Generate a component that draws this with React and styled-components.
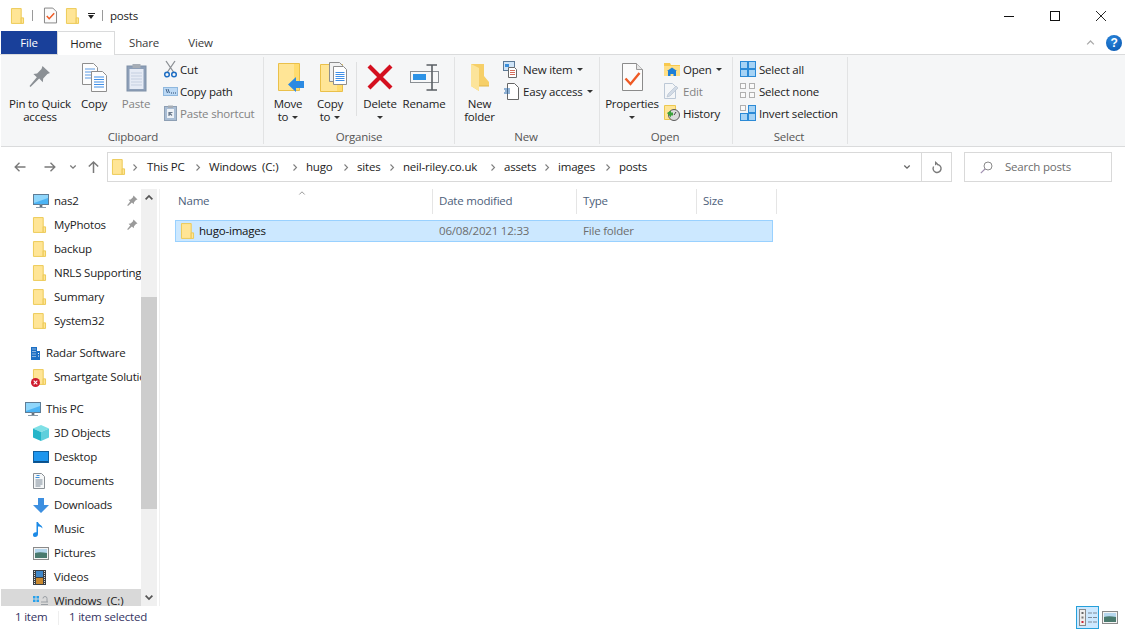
import React from 'react';
import styled, { createGlobalStyle } from 'styled-components';

const Global = createGlobalStyle`
  html, body { margin: 0; padding: 0; background: #fff; }
  body { font-family: "Open Sans", "Noto Sans", "Liberation Sans", sans-serif; font-size: 11.5px; color: #1a1a1a; letter-spacing: -0.2px; }
  #root { width: 1125px; height: 629px; overflow: hidden; }
`;

const Window = styled.div`
  width: 1125px; height: 629px; display: flex; flex-direction: column; overflow: hidden; background: #fff;
`;
const Svg = styled.svg`display: block; flex-shrink: 0; overflow: visible;`;

/* ---------- icons ---------- */
const FolderIcon = ({ w = 14, h = 17 }) => (
  <Svg width={w} height={h} viewBox="0 0 14 17">
    <path d="M.5.5h10.5v16H.5z" fill="#ffe596" stroke="#ecc850" />
    <path d="M11 10.5h2.5v6H11z" fill="#ffe596" stroke="#ecc850" />
  </Svg>
);
const CheckDoc = () => (
  <Svg width="13" height="17" viewBox="0 0 14 17">
    <path d="M.5.5h9l4 4v12H.5z" fill="#fbfbfb" stroke="#808080" />
    <path d="M3 9l2.6 3L11 6" fill="none" stroke="#ef5a24" strokeWidth="1.6" />
  </Svg>
);
const PinSmall = () => (
  <Svg width="11" height="11" viewBox="0 0 11 11">
    <path d="M6.5.5l4 4-1.5.5-2 2.2-.3 2-1.8-1.8L1 11 .2 10.2 3.2 6.6 1.6 4.8l2-.3 2.2-2z" fill="#9a9a9a" />
  </Svg>
);
const PinLarge = () => (
  <Svg width="22" height="22" viewBox="0 0 22 22">
    <path d="M13.5 0L21 7l-2.6 1-4.2 4.6-.4 3.6-3.6-3.6L1.5 21 .5 20l7.3-8.7L4.4 8l3.7-.5 4.4-4.6z" fill="#8b9095" />
  </Svg>
);
const CopyLarge = () => (
  <Svg width="25" height="29" viewBox="0 0 25 29">
    <path d="M.5.5h11l4 4v17H.5z" fill="#fdfdfd" stroke="#8e8e8e" />
    <path d="M3 6h10M3 9h10M3 12h10M3 15h10" stroke="#5b9be6" />
    <path d="M9.5 8.5h11l4 4v16h-15z" fill="#fdfdfd" stroke="#8e8e8e" />
    <path d="M12 14h10M12 16.500h10M12 19h10M12 21.500h10M12 24h10" stroke="#3f8fe8" />
  </Svg>
);
const PasteLarge = () => (
  <Svg width="21" height="29" viewBox="0 0 21 29">
    <rect x="1" y="3" width="19" height="25" fill="#8d9fb8" stroke="#7f90a8" />
    <rect x="3.500" y="6" width="14" height="20" fill="#e6ebf5" />
    <path d="M5 10h11M5 13h11M5 16h11M5 19h11M5 22h11" stroke="#c5cfe0" />
    <rect x="6.500" y="1" width="8" height="4" fill="#a6adb6" />
  </Svg>
);
const CutIcon = () => (
  <Svg width="13" height="17" viewBox="0 0 13 17">
    <path d="M2 0l7.500 11M11 0L3.500 11" stroke="#8b8f94" strokeWidth="1.300" />
    <circle cx="3" cy="13.500" r="2.300" fill="none" stroke="#1f6fc4" strokeWidth="1.500" />
    <circle cx="10" cy="13.500" r="2.300" fill="none" stroke="#1f6fc4" strokeWidth="1.500" />
  </Svg>
);
const PathIcon = () => (
  <Svg width="15" height="9" viewBox="0 0 15 9">
    <rect x=".5" y=".5" width="14" height="8" fill="#bcd9f5" stroke="#8fb8de" />
    <path d="M3 2l1.500 4M5 2l1.500 4" stroke="#24466e" strokeWidth=".8" />
    <path d="M8 6h1M10 6h1M12 6h1" stroke="#24466e" />
  </Svg>
);
const PasteShortcutIcon = () => (
  <Svg width="13" height="16" viewBox="0 0 13 16">
    <rect x=".5" y="1.500" width="12" height="14" fill="#a9bdd4" stroke="#8d9fb4" />
    <rect x="3" y="4" width="7" height="9" fill="#eef2f7" />
    <rect x="4" y=".5" width="5" height="2.500" fill="#a6adb6" />
    <path d="M5 11V7.500h3.500M5.500 8L8 10.500" fill="none" stroke="#6d7c8e" strokeWidth="1.200" />
  </Svg>
);
const MoveIcon = () => (
  <Svg width="27" height="29" viewBox="0 0 27 29">
    <path d="M.5.500h21v27H.5z" fill="#ffdc6e" stroke="#eac04a" />
    <path d="M1 1h15v26H1z" fill="#ffe596" />
    <path d="M10 21.500l8-7.500v4h8v7h-8v4z" fill="#2c8ae2" />
  </Svg>
);
const CopyToIcon = () => (
  <Svg width="27" height="30" viewBox="0 0 27 30">
    <path d="M.5 2.500h22v27H.5z" fill="#ffdc6e" stroke="#eac04a" />
    <path d="M1 3h16v26H1z" fill="#ffe596" />
    <path d="M9.500.500h10l3 3v16h-13z" fill="#f2f2f2" stroke="#8e8e8e" />
    <path d="M13.500 4.500h10l3 3v15h-13z" fill="#fff" stroke="#8e8e8e" />
    <path d="M15.500 10.500h9M15.500 12.500h9M15.500 14.500h9M15.500 16.500h9M15.500 18.500h9" stroke="#3f8fe8" />
  </Svg>
);
const DeleteIcon = () => (
  <Svg width="26" height="26" viewBox="0 0 26 26">
    <path d="M2 2l22 22M24 2L2 24" stroke="#d40f1f" strokeWidth="4.200" />
  </Svg>
);
const RenameIcon = () => (
  <Svg width="29" height="27" viewBox="0 0 29 27">
    <rect x=".5" y="7.500" width="28" height="11" fill="#f7f8f9" stroke="#8a8f94" />
    <rect x="3" y="10" width="13" height="6" fill="#2d93e6" />
    <path d="M16.500 1h5.500v25h-5.500M27 1h-5M27 26h-5" fill="none" stroke="#5a5f64" strokeWidth="1.600" />
  </Svg>
);
const NewFolderIcon = () => (
  <Svg width="18" height="27" viewBox="0 0 18 27">
    <path d="M0 0h13v12l5 6v4H8v5l-8-5z" fill="#f6cf68" />
    <path d="M0 0l8 4v23l-8-5z" fill="#fce49a" />
    <path d="M8 22h10" stroke="#e2b74a" />
  </Svg>
);
const NewItemIcon = () => (
  <Svg width="17" height="17" viewBox="0 0 17 17">
    <rect x=".5" y=".5" width="11" height="9" fill="#cfe4f7" stroke="#5c7a97" />
    <rect x="2" y="3" width="4" height="3" fill="#3a8fdc" />
    <path d="M5.500 6.500h6l2 2v8h-8z" fill="#fff" stroke="#6a6a6a" />
    <path d="M7 9.500h5M7 11.500h5M7 13.500h5" stroke="#d46d5b" />
  </Svg>
);
const EasyAccessIcon = () => (
  <Svg width="15" height="17" viewBox="0 0 15 17">
    <path d="M3.500.5h7l4 4v12h-11z" fill="#fff" stroke="#666" />
    <path d="M0 6h6M1 8h5M0 10h6" stroke="#2b6cb0" />
  </Svg>
);
const PropsIcon = () => (
  <Svg width="21" height="28" viewBox="0 0 21 28">
    <path d="M.5.500h14l6 6v21H.5z" fill="#fbfbfb" stroke="#8b8b8b" />
    <path d="M14.500.500v6h6" fill="#e6e6e6" stroke="#9b9b9b" />
    <path d="M3.500 15.500l5 5.500 9-11" fill="none" stroke="#ef5a24" strokeWidth="2.400" />
  </Svg>
);
const OpenIcon = () => (
  <Svg width="16" height="14" viewBox="0 0 16 14">
    <path d="M0 1h6l1 2h9v11H0z" fill="#f8c94e" />
    <path d="M0 4h16v10H0z" fill="#ffdf86" />
    <path d="M4 14V9h8v5h-2.500v-2h-3v2z" fill="#1d7fd8" />
    <path d="M3 9l5-3.500L13 9z" fill="#1d7fd8" />
  </Svg>
);
const EditIcon = () => (
  <Svg width="15" height="16" viewBox="0 0 15 16">
    <path d="M.5.5h8l3 3v12H.5z" fill="#f4f6f8" stroke="#bcc8d6" />
    <path d="M3 14l1-3 8-8 2 2-8 8z" fill="#d2dbe6" stroke="#b0bccb" strokeWidth=".6" />
  </Svg>
);
const HistoryIcon = () => (
  <Svg width="16" height="16" viewBox="0 0 16 16">
    <path d="M.5.500h11v14H.5z" fill="#ffe596" stroke="#ecc850" />
    <circle cx="10" cy="10" r="5.500" fill="#dcdcdc" stroke="#5a5a5a" />
    <path d="M10 10l2-3" stroke="#444" />
    <path d="M3 8l4-2.500V7.500h2v3H7V12.500z" fill="#3ba13b" />
  </Svg>
);
const Grid = ({ on }) => {
  const sq = (x, y, active) => active
    ? <rect key={x + '-' + y} x={x + .5} y={y + .5} width="7" height="7" fill="#a6d3f5" stroke="#2b8ad6" />
    : <rect key={x + '-' + y} x={x + (x ? 1.5 : .5)} y={y + (y ? 1.5 : .5)} width="5" height="5" fill="#fafafa" stroke="#b0b0b0" />;
  return (
    <Svg width="16" height="16" viewBox="0 0 16 16">
      {sq(0, 0, on[0])}{sq(8, 0, on[1])}{sq(0, 8, on[2])}{sq(8, 8, on[3])}
    </Svg>
  );
};
const ArrowSvg = styled(Svg)`transform: ${p => p.$flip ? 'scaleX(-1)' : 'none'};`;
const BackArrow = ({ flip }) => (
  <ArrowSvg $flip={flip} width="12" height="10" viewBox="0 0 12 10">
    <path d="M1 5h10.500M5.500 .8L1.200 5l4.300 4.200" fill="none" stroke="#7a7a7a" strokeWidth="1.400" />
  </ArrowSvg>
);
const UpArrow = () => (
  <Svg width="11" height="12" viewBox="0 0 11 12">
    <path d="M5.500 12V1M.8 5.500L5.500 1l4.700 4.500" fill="none" stroke="#7a7a7a" strokeWidth="1.500" />
  </Svg>
);
const Chev = ({ w = 6, h = 4, color = '#7a7a7a', up, sw = 1.300 }) => (
  <Svg width={w} height={h} viewBox="0 0 6 4">
    <path d={up ? 'M.3 3.500L3 .8l2.700 2.700' : 'M.3 .5L3 3.200 5.700 .5'} fill="none" stroke={color} strokeWidth={sw} />
  </Svg>
);
const ChevR = () => (
  <Svg width="4" height="7" viewBox="0 0 4 7">
    <path d="M.5 .5l3 3-3 3" fill="none" stroke="#7f7f7f" strokeWidth="1.100" />
  </Svg>
);
const Refresh = () => (
  <Svg width="10" height="12" viewBox="0 0 10 12">
    <path d="M5 2.500A4 4 0 1 1 1.600 4.500" fill="none" stroke="#7a7a7a" strokeWidth="1.400" transform="translate(0 1)" />
    <path d="M3 0l3 2.500-3 2z" fill="#7a7a7a" />
  </Svg>
);
const SearchIcon = () => (
  <Svg width="13" height="13" viewBox="0 0 13 13">
    <circle cx="8" cy="5" r="4" fill="none" stroke="#8a8a8a" />
    <path d="M5 8L.8 12.200" stroke="#a08fb0" strokeWidth="1.100" />
  </Svg>
);
const Monitor = () => (
  <Svg width="16" height="15" viewBox="0 0 16 15">
    <rect x=".5" y=".5" width="15" height="10" fill="#4cb4f5" stroke="#5e7d96" />
    <path d="M1 1h14v3L1 9z" fill="#8fd6fb" />
    <path d="M7 11h2v2H7zM3 13.500h10" stroke="#8a9aa8" />
  </Svg>
);
const Building = () => (
  <Svg width="9" height="13" viewBox="0 0 9 13">
    <path d="M0 0h6v13H0zM6 4h3v9H6z" fill="#1c6fc4" />
    <path d="M1.500 2h1M3.500 2h1M1.500 4.500h1M3.500 4.500h1M1.500 7h1M3.500 7h1M1.500 9.500h1M3.500 9.500h1M7 6.500h1M7 9h1" stroke="#fff" />
  </Svg>
);
const ErrFolder = () => (
  <FolderWrap>
    <FolderIcon w={13} h={16} />
    <ErrBadge>
      <Svg width="9" height="9" viewBox="0 0 9 9">
        <circle cx="4.500" cy="4.500" r="4.500" fill="#cf1b2f" />
        <path d="M2.700 2.700l3.600 3.600M6.300 2.700L2.700 6.300" stroke="#fff" strokeWidth="1.100" />
      </Svg>
    </ErrBadge>
  </FolderWrap>
);
const Cube = () => (
  <Svg width="16" height="16" viewBox="0 0 16 16">
    <path d="M8 0l8 3.500-8 3.500L0 3.500z" fill="#7fe0e6" />
    <path d="M0 3.500L8 7v9L0 12.500z" fill="#25b5c9" />
    <path d="M16 3.500L8 7v9l8-3.500z" fill="#5fcfdc" />
  </Svg>
);
const Desktop = () => (
  <Svg width="16" height="12" viewBox="0 0 16 12">
    <rect x=".5" y=".5" width="15" height="11" fill="#1e96ee" stroke="#0f5f9f" />
    <path d="M1 10h14v1.500H1z" fill="#0b4f88" />
  </Svg>
);
const DocIcon = () => (
  <Svg width="12" height="16" viewBox="0 0 12 16">
    <path d="M.5.500h8l3 3v12H.5z" fill="#f5f7f8" stroke="#8a8f94" />
    <path d="M2.500 7h7M2.500 9h7M2.500 11h7M2.500 13h5" stroke="#7c8a98" />
    <path d="M3.500 2.500h3M2.500 4.500h4" stroke="#3a8fdc" />
  </Svg>
);
const Download = () => (
  <Svg width="16" height="15" viewBox="0 0 16 15">
    <path d="M5 0h6v7h5l-8 8-8-8h5z" fill="#3d8fe0" />
  </Svg>
);
const Music = () => (
  <Svg width="10" height="15" viewBox="0 0 10 15">
    <path d="M3.500 0h1.500c.3 2.500 4.500 3 4.500 6.500C8.500 4.800 6 4.500 5 4.500V12c0 1.700-1.200 3-3 3S0 13.800 0 12.500 1.500 10 3.500 10.300z" fill="#1c8ae6" />
  </Svg>
);
const Pictures = () => (
  <Svg width="16" height="13" viewBox="0 0 16 13">
    <rect x=".5" y=".5" width="15" height="12" fill="#f4f4f4" stroke="#8a8a8a" />
    <path d="M2 2h12v4H2z" fill="#b6d7ee" />
    <path d="M2 6c3-1 7-1 12 0v5H2z" fill="#4a7a6e" />
  </Svg>
);
const Film = () => (
  <Svg width="13" height="15" viewBox="0 0 13 15">
    <rect width="13" height="15" fill="#3a3f44" />
    <rect x="3" y="1" width="7" height="6" fill="#3f87c9" />
    <rect x="3" y="8" width="7" height="6" fill="#c9892f" />
    <path d="M1.500 1v13M11.500 1v13" stroke="#ddd" strokeDasharray="1 1" />
  </Svg>
);
const Drive = () => (
  <Svg width="16" height="13" viewBox="0 0 16 13">
    <path d="M0 1h2.500v2.500H0zM3.500 1H6v2.500H3.500zM0 4.500h2.500V7H0zM3.500 4.500H6V7H3.500z" fill="#27a0ea" />
    <path d="M8 7h7M8 9.500h7M10 3.500a2 2 0 0 1 4 0V7" fill="none" stroke="#9a9fa4" />
  </Svg>
);
const DetailsView = () => (
  <Svg width="18" height="17" viewBox="0 0 18 17">
    <rect x=".5" y=".5" width="6" height="16" fill="#eee" stroke="#8a8a8a" />
    <path d="M2.500 3h2v2h-2z" fill="#666" /><path d="M2.500 7.500h2v2h-2z" fill="#777" /><path d="M2.500 12h2v2h-2z" fill="#c23" />
    <path d="M9 4h4M14 4h4M9 8.500h4M14 8.500h4M9 13h4M14 13h4" stroke="#7c8a98" />
  </Svg>
);

/* ---------- title bar ---------- */
const TitleBar = styled.div`
  height: 31px; display: flex; align-items: center; padding-left: 11px; flex-shrink: 0;
`;
const QuickSep = styled.span`
  width: 1px; height: 11px; background: #9a9a9a; margin: 0 ${p => p.$r}px 0 ${p => p.$l}px;
`;
const QuickSpacer = styled.span`width: ${p => p.$w}px; flex-shrink: 0;`;
const QuickMenu = styled.span`
  display: flex; flex-direction: column; align-items: center; width: 8px; gap: 1px;
  &::before { content: ""; width: 7px; height: 1px; background: #222; }
  &::after { content: ""; border: 3.500px solid transparent; border-bottom: 0; border-top: 4px solid #222; }
`;
const TitleText = styled.span`color: #222; margin-top: -1px;`;
const WinButtons = styled.div`
  margin-left: auto; display: flex; align-items: center; padding-right: 1px;
`;
const WinBtn = styled.div`
  width: 46px; height: 31px; display: flex; align-items: center; justify-content: center;
`;

/* ---------- tabs ---------- */
const TabRow = styled.div`
  height: 24px; display: flex; align-items: stretch; padding-left: 1px; border-bottom: 1px solid #dadbdc;
  box-sizing: border-box; flex-shrink: 0;
`;
const FileTab = styled.div`
  width: 56px; background: #19409a; color: #fff; display: flex; align-items: center; justify-content: center;
`;
const Tab = styled.div`
  width: ${p => p.$w}px; display: flex; align-items: center; justify-content: center; color: #3a3a3a; box-sizing: border-box;
  ${p => p.$active && `
    background: #fff; color: #222; border: 1px solid #dadbdc; border-bottom: 0; height: 24px;
  `}
`;
const TabRight = styled.div`
  margin-left: auto; display: flex; align-items: center; gap: 11px; padding-right: 3px;
`;
const Help = styled.div`
  width: 16px; height: 16px; border-radius: 50%; background: radial-gradient(circle at 40% 30%, #2a86dc, #0654ad);
  color: #fff; font: bold 12px "Liberation Sans", sans-serif; display: flex; align-items: center; justify-content: center;
`;

/* ---------- ribbon ---------- */
const Ribbon = styled.div`
  height: 92px; margin-left: 1px; background: #f5f6f7; border-bottom: 1px solid #dadbdc; display: flex;
  box-sizing: border-box; padding-top: 2px; flex-shrink: 0;
`;
const Group = styled.div`
  width: ${p => p.$w}px; height: 87px; box-sizing: border-box; border-right: 1px solid #e2e3e4;
  display: flex; flex-direction: column;
`;
const GroupBody = styled.div`
  height: 73px; display: flex; padding-left: ${p => p.$pad}px;
`;
const GroupLabel = styled.div`
  height: 14px; line-height: 14px; text-align: center; color: #555;
  padding: 0 ${p => p.$r || 0}px 0 ${p => p.$l || 0}px;
`;
const Big = styled.div`
  width: ${p => p.$w}px; flex-shrink: 0; display: flex; flex-direction: column; align-items: center;
  color: ${p => p.$off ? '#838383' : '#222'};
`;
const BigIcon = styled.div`
  height: 40px; display: flex; align-items: center; justify-content: center; flex-shrink: 0;
  padding-left: ${p => p.$dx || 0}px;
`;
const BigLabel = styled.div`
  line-height: 13px; text-align: center; white-space: nowrap;
`;
const Caret = styled.span`
  display: inline-block; border: 3px solid transparent; border-bottom: 0; border-top: 3px solid #333;
  vertical-align: middle; margin-left: ${p => p.$ml ?? 4}px;
`;
const VSep = styled.div`
  width: 1px; height: 54px; background: #dfe0e1; margin: 5px 0 0 4px; flex-shrink: 0;
`;
const SmallCol = styled.div`
  display: flex; flex-direction: column; padding-top: 1px;
`;
const SmallRow = styled.div`
  height: 22px; display: flex; align-items: center; white-space: nowrap;
  color: ${p => p.$off ? '#838383' : '#222'};
`;
const SmallIcon = styled.div`
  width: ${p => p.$w}px; display: flex; justify-content: center; flex-shrink: 0;
`;

/* ---------- address ---------- */
const AddressRow = styled.div`
  height: 40px; display: flex; align-items: center; padding-left: 14px; flex-shrink: 0;
`;
const NavSlot = styled.div`
  width: ${p => p.$w}px; display: flex; flex-shrink: 0;
`;
const AddressBox = styled.div`
  width: 845px; height: 30px; box-sizing: border-box; border: 1px solid #d9d9d9; display: flex; align-items: center;
  padding-left: 4px; margin-left: 7px;
`;
const Crumb = styled.span`
  width: ${p => p.$w}px; flex-shrink: 0; color: #222; white-space: pre; padding-bottom: 2px;
`;
const CrumbChev = styled.span`
  width: ${p => p.$w}px; margin-left: ${p => p.$ml || 0}px; display: flex; flex-shrink: 0;
`;
const AddrRight = styled.div`margin-left: auto; display: flex; align-items: center; height: 100%;`;
const AddrDrop = styled.div`width: 28px; display: flex; justify-content: center;`;
const AddrRefresh = styled.div`
  width: 29px; height: 100%; border-left: 1px solid #d9d9d9; display: flex; align-items: center; justify-content: center;
`;
const SearchBox = styled.div`
  width: 148px; height: 30px; box-sizing: border-box; border: 1px solid #d9d9d9; margin-left: 12px; display: flex; align-items: center;
  padding-left: 15px; gap: 12px; color: #6d6d6d;
`;
const SearchText = styled.span`padding-bottom: 2px;`;

/* ---------- main ---------- */
const Main = styled.div`
  flex: 1; min-height: 0; display: flex; padding-top: 2px;
`;
const Sidebar = styled.div`
  width: 140px; margin-left: 1px; flex-shrink: 0; overflow: hidden; position: relative;
`;
const TreeRow = styled.div`
  height: 24px; display: flex; align-items: center; position: relative; white-space: pre; overflow: hidden;
  margin-bottom: ${p => p.$gap ? 8 : 0}px; color: #222;
  padding-left: ${p => p.$lvl === 1 ? 24 : 32}px;
  ${p => p.$sel && 'background: #d9d9d9;'}
`;
const TreeIcon = styled.div`
  width: 21px; display: flex; align-items: center; justify-content: ${p => p.$center ? 'center' : 'flex-start'}; flex-shrink: 0;
`;
const TreeText = styled.span`padding-bottom: 2px;`;
const RowPin = styled.div`
  position: absolute; left: 126px; top: 6px;
`;
const FolderWrap = styled.div`position: relative; display: flex;`;
const ErrBadge = styled.div`position: absolute; left: -2px; bottom: -2px;`;
const Scrollbar = styled.div`
  width: 16px; flex-shrink: 0; background: #f0f0f0; display: flex; flex-direction: column; align-items: center;
`;
const ScrollBtn = styled.div`
  height: 17px; display: flex; align-items: center; justify-content: center; flex-shrink: 0;
`;
const ScrollGap = styled.div`height: ${p => p.$h}px; flex-shrink: 0;`;
const ScrollThumb = styled.div`
  width: 16px; height: 212px; background: #cdcdcd; flex-shrink: 0;
`;
const Content = styled.div`
  flex: 1; margin-left: 2px; border-left: 1px solid #f0f0f0; padding-left: 15px; position: relative; min-width: 0;
`;
const HeaderRow = styled.div`
  height: 25px; display: flex; position: relative;
`;
const HeadCell = styled.div`
  width: ${p => p.$w}px; box-sizing: border-box; padding: 0 0 2px ${p => p.$pl ?? 6}px; color: #4c607a; border-right: 1px solid #e5e5e5;
  display: flex; align-items: center; height: 25px; flex-shrink: 0;
`;
const SortCaret = styled.div`position: absolute; left: 123px; top: 2px;`;
const FileRow = styled.div`
  margin-top: 6px; width: 598px; height: 22px; box-sizing: border-box; background: #cce8ff; border: 1px solid #99d1ff;
  display: flex; align-items: center; padding-left: 5px;
`;
const FileName = styled.div`width: 240px; margin-left: 5px; padding-bottom: 2px; color: #111; flex-shrink: 0;`;
const FileMeta = styled.div`width: ${p => p.$w}px; padding-bottom: 2px; color: #6d6d6d; flex-shrink: 0;`;

/* ---------- status ---------- */
const StatusBar = styled.div`
  height: 23px; display: flex; align-items: center; padding-left: 15px; color: #33335f; flex-shrink: 0; position: relative;
`;
const StatusCell = styled.span`width: ${p => p.$w}px; padding-bottom: 2px; flex-shrink: 0;`;
const StatusSep = styled.span`width: 1px; height: 14px; background: #eee; margin: 0 10px;`;
const ViewButtons = styled.div`
  margin-left: auto; display: flex; align-items: center; gap: 3px; padding-right: 8px;
`;
const ViewBtn = styled.div`
  width: ${p => p.$w}px; height: 23px; box-sizing: border-box; display: flex; align-items: center; justify-content: center;
  ${p => p.$on && 'background: #cce8ff; border: 1px solid #26a0da;'}
`;

const crumbs = [
  ['This PC', 49], ['Windows  (C:)', 84], ['hugo', 38], ['sites', 33], ['neil-riley.co.uk', 88],
  ['assets', 41], ['images', 48], ['posts', 32],
];

const tree = [
  { t: 'nas2', i: <Monitor />, pin: 1 },
  { t: 'MyPhotos', i: <FolderIcon w={13} h={16} />, pin: 1 },
  { t: 'backup', i: <FolderIcon w={13} h={16} /> },
  { t: 'NRLS Supporting Documents', i: <FolderIcon w={13} h={16} /> },
  { t: 'Summary', i: <FolderIcon w={13} h={16} /> },
  { t: 'System32', i: <FolderIcon w={13} h={16} />, gap: 1 },
  { t: 'Radar Software', i: <Building />, lvl: 1, center: 1 },
  { t: 'Smartgate Solutions', i: <ErrFolder />, gap: 1 },
  { t: 'This PC', i: <Monitor />, lvl: 1 },
  { t: '3D Objects', i: <Cube /> },
  { t: 'Desktop', i: <Desktop /> },
  { t: 'Documents', i: <DocIcon /> },
  { t: 'Downloads', i: <Download /> },
  { t: 'Music', i: <Music /> },
  { t: 'Pictures', i: <Pictures /> },
  { t: 'Videos', i: <Film /> },
  { t: 'Windows  (C:)', i: <Drive />, sel: 1 },
];

export default function App() {
  return (
    <Window>
      <Global />
      <TitleBar>
        <FolderIcon w={13} h={16} />
        <QuickSep $l={8} $r={11} />
        <CheckDoc />
        <QuickSpacer $w={9} />
        <FolderIcon w={13} h={16} />
        <QuickSpacer $w={8} />
        <QuickMenu />
        <QuickSep $l={7} $r={7} />
        <TitleText>posts</TitleText>
        <WinButtons>
          <WinBtn><Svg width="10" height="10" viewBox="0 0 10 10"><path d="M0 5.500h10" stroke="#111" /></Svg></WinBtn>
          <WinBtn><Svg width="10" height="10" viewBox="0 0 10 10"><rect x=".5" y=".5" width="9" height="9" fill="none" stroke="#111" /></Svg></WinBtn>
          <WinBtn><Svg width="10" height="10" viewBox="0 0 10 10"><path d="M0 0l10 10M10 0L0 10" stroke="#111" strokeWidth=".9" /></Svg></WinBtn>
        </WinButtons>
      </TitleBar>

      <TabRow>
        <FileTab>File</FileTab>
        <Tab $w={58} $active>Home</Tab>
        <Tab $w={58}>Share</Tab>
        <Tab $w={55}>View</Tab>
        <TabRight>
          <Chev w={9} h={5} color="#aaa" up sw={1} />
          <Help>?</Help>
        </TabRight>
      </TabRow>

      <Ribbon>
        <Group $w={263}>
          <GroupBody $pad={3}>
            <Big $w={72}><BigIcon><PinLarge /></BigIcon><BigLabel>Pin to Quick<br />access</BigLabel></Big>
            <Big $w={36}><BigIcon><CopyLarge /></BigIcon><BigLabel>Copy</BigLabel></Big>
            <Big $w={48} $off><BigIcon><PasteLarge /></BigIcon><BigLabel>Paste</BigLabel></Big>
            <SmallCol>
              <SmallRow><SmallIcon $w={20}><CutIcon /></SmallIcon>Cut</SmallRow>
              <SmallRow><SmallIcon $w={20}><PathIcon /></SmallIcon>Copy path</SmallRow>
              <SmallRow $off><SmallIcon $w={20}><PasteShortcutIcon /></SmallIcon>Paste shortcut</SmallRow>
            </SmallCol>
          </GroupBody>
          <GroupLabel $l={2}>Clipboard</GroupLabel>
        </Group>
        <Group $w={191}>
          <GroupBody $pad={4}>
            <Big $w={40}><BigIcon $dx={6}><MoveIcon /></BigIcon><BigLabel>Move<br />to<Caret /></BigLabel></Big>
            <Big $w={44}><BigIcon $dx={6}><CopyToIcon /></BigIcon><BigLabel>Copy<br />to<Caret /></BigLabel></Big>
            <VSep />
            <Big $w={46}><BigIcon><DeleteIcon /></BigIcon><BigLabel>Delete<br /><Caret $ml={0} /></BigLabel></Big>
            <Big $w={42}><BigIcon><RenameIcon /></BigIcon><BigLabel>Rename</BigLabel></Big>
          </GroupBody>
          <GroupLabel>Organise</GroupLabel>
        </Group>
        <Group $w={145}>
          <GroupBody $pad={4}>
            <Big $w={41}><BigIcon><NewFolderIcon /></BigIcon><BigLabel>New<br />folder</BigLabel></Big>
            <SmallCol>
              <SmallRow><SmallIcon $w={23}><NewItemIcon /></SmallIcon>New item<Caret /></SmallRow>
              <SmallRow><SmallIcon $w={23}><EasyAccessIcon /></SmallIcon>Easy access<Caret /></SmallRow>
            </SmallCol>
          </GroupBody>
          <GroupLabel $r={2}>New</GroupLabel>
        </Group>
        <Group $w={133}>
          <GroupBody $pad={4}>
            <Big $w={56}><BigIcon><PropsIcon /></BigIcon><BigLabel>Properties<br /><Caret $ml={0} /></BigLabel></Big>
            <SmallCol>
              <SmallRow><SmallIcon $w={23}><OpenIcon /></SmallIcon>Open<Caret /></SmallRow>
              <SmallRow $off><SmallIcon $w={23}><EditIcon /></SmallIcon>Edit</SmallRow>
              <SmallRow><SmallIcon $w={23}><HistoryIcon /></SmallIcon>History</SmallRow>
            </SmallCol>
          </GroupBody>
          <GroupLabel $r={2}>Open</GroupLabel>
        </Group>
        <Group $w={115}>
          <GroupBody $pad={4}>
            <SmallCol>
              <SmallRow><SmallIcon $w={22}><Grid on={[1, 1, 1, 1]} /></SmallIcon>Select all</SmallRow>
              <SmallRow><SmallIcon $w={22}><Grid on={[0, 0, 0, 0]} /></SmallIcon>Select none</SmallRow>
              <SmallRow><SmallIcon $w={22}><Grid on={[0, 1, 1, 1]} /></SmallIcon>Invert selection</SmallRow>
            </SmallCol>
          </GroupBody>
          <GroupLabel $r={2}>Select</GroupLabel>
        </Group>
      </Ribbon>

      <AddressRow>
        <NavSlot $w={30}><BackArrow /></NavSlot>
        <NavSlot $w={26}><BackArrow flip /></NavSlot>
        <NavSlot $w={18}><Chev /></NavSlot>
        <NavSlot $w={12}><UpArrow /></NavSlot>
        <AddressBox>
          <FolderIcon w={13} h={16} />
          <CrumbChev $w={14} $ml={8}><ChevR /></CrumbChev>
          {crumbs.map(([t, w], i) => (
            <React.Fragment key={t}>
              <Crumb $w={w}>{t}</Crumb>
              {i < crumbs.length - 1 && <CrumbChev $w={13}><ChevR /></CrumbChev>}
            </React.Fragment>
          ))}
          <AddrRight>
            <AddrDrop><Chev color="#666" /></AddrDrop>
            <AddrRefresh><Refresh /></AddrRefresh>
          </AddrRight>
        </AddressBox>
        <SearchBox><SearchIcon /><SearchText>Search posts</SearchText></SearchBox>
      </AddressRow>

      <Main>
        <Sidebar>
          {tree.map(r => (
            <TreeRow key={r.t} $lvl={r.lvl} $gap={r.gap} $sel={r.sel}>
              <TreeIcon $center={r.center}>{r.i}</TreeIcon>
              <TreeText>{r.t}</TreeText>
              {r.pin && <RowPin><PinSmall /></RowPin>}
            </TreeRow>
          ))}
        </Sidebar>
        <Scrollbar>
          <ScrollBtn><Chev w={8} h={5} color="#555" up sw={1.400} /></ScrollBtn>
          <ScrollGap $h={91} />
          <ScrollThumb />
          <ScrollGap $h={80} />
          <ScrollBtn><Chev w={8} h={5} color="#555" sw={1.400} /></ScrollBtn>
        </Scrollbar>
        <Content>
          <HeaderRow>
            <HeadCell $w={258} $pl={3}>Name</HeadCell>
            <HeadCell $w={144}>Date modified</HeadCell>
            <HeadCell $w={120}>Type</HeadCell>
            <HeadCell $w={80}>Size</HeadCell>
            <SortCaret><Chev w={8} h={4} color="#999" up sw={1} /></SortCaret>
          </HeaderRow>
          <FileRow>
            <FolderIcon w={13} h={16} />
            <FileName>hugo-images</FileName>
            <FileMeta $w={144}>06/08/2021 12:33</FileMeta>
            <FileMeta $w={100}>File folder</FileMeta>
          </FileRow>
        </Content>
      </Main>

      <StatusBar>
        <StatusCell $w={33}>1 item</StatusCell>
        <StatusSep />
        <StatusCell $w={90}>1 item selected</StatusCell>
        <ViewButtons>
          <ViewBtn $w={23} $on><DetailsView /></ViewBtn>
          <ViewBtn $w={15}><Pictures /></ViewBtn>
        </ViewButtons>
      </StatusBar>
    </Window>
  );
}
